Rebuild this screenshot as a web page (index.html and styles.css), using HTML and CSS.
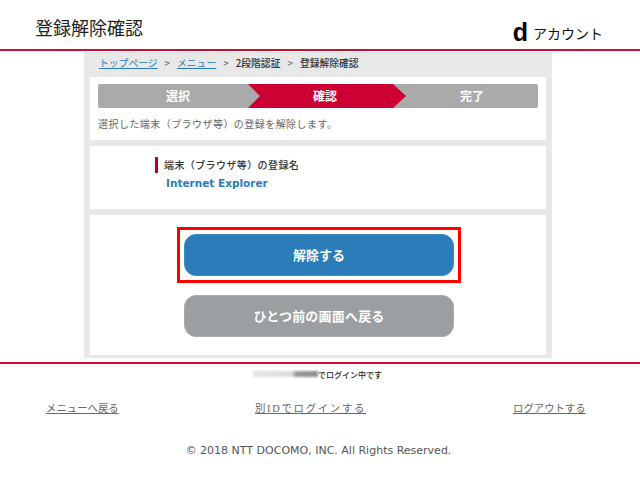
FILE: index.html
```html
<!DOCTYPE html>
<html lang="ja">
<head>
    <meta charset="UTF-8">
    <meta name="viewport" content="width=device-width, initial-scale=1.0">
    <title>登録解除確認</title>
    <link rel="stylesheet" href="styles.css">
</head>
<body>
    <!-- ヘッダー -->
    <header class="site-header">
        <h1 class="page-title">登録解除確認</h1>
        <div class="logo"><span class="logo-d">d</span><span class="logo-text">アカウント</span></div>
    </header>

    <div class="main">
        <!-- パンくず -->
        <div class="crumbs">
            <a href="#">トップページ</a><span class="sep">&gt;</span><a href="#">メニュー</a><span class="sep">&gt;</span><b>2段階認証</b><span class="sep">&gt;</span><b>登録解除確認</b>
        </div>

        <div class="panel panel-steps">
            <div class="steps">
                <div class="step step-first">選択</div>
                <div class="step step-current">確認</div>
                <div class="step step-last">完了</div>
            </div>
            <p class="lead">選択した端末（ブラウザ等）の登録を解除します。</p>
        </div>

        <div class="panel panel-name">
            <div class="name-label">端末（ブラウザ等）の登録名</div>
            <div class="name-value">Internet Explorer</div>
        </div>

        <div class="panel panel-actions">
            <div class="highlight">
                <a href="#" class="btn btn-blue">解除する</a>
            </div>
            <a href="#" class="btn btn-gray">ひとつ前の画面へ戻る</a>
        </div>
    </div>

    <!-- フッター -->
    <footer class="site-footer">
        <div class="login-line"><span class="masked"></span>でログイン中です</div>
        <div class="foot-links">
            <a href="#">メニューへ戻る</a>
            <a href="#" class="link-wide">別IDでログインする</a>
            <a href="#">ログアウトする</a>
        </div>
        <p class="copyright">© 2018 NTT DOCOMO, INC. All Rights Reserved.</p>
    </footer>
</body>
</html>
```

FILE: styles.css
```css
body {
    margin: 0;
    background: #fff;
    color: #333;
    font-family: "Noto Sans CJK JP", "Liberation Sans", sans-serif;
}

/* ヘッダー */
.site-header {
    height: 49px;
    padding: 0 37px 0 35px;
    display: flex;
    justify-content: space-between;
    border-bottom: 2px solid #c8102e;
}

.page-title {
    margin: 15px 0 0;
    font-size: 18px;
    line-height: 25px;
    font-weight: 400;
    color: #222;
}

.logo {
    display: flex;
    align-items: flex-end;
    height: 44px;
    color: #111;
}

.logo-d {
    font-family: "Liberation Sans", sans-serif;
    font-weight: 700;
    font-size: 25px;
    line-height: 24px;
    margin-right: 5px;
    color: #000;
}

.logo-text {
    font-size: 14px;
    line-height: 22px;
}

/* メイン */
.main {
    width: 456px;
    margin: 1px 0 0 84px;
    padding: 0 6px 3px;
    background: #e8e8e8;
}

.crumbs {
    height: 25px;
    padding-left: 9px;
    font-size: 9.8px;
    line-height: 22px;
    color: #444;
}

.crumbs a {
    color: #2a7cb8;
}

.crumbs b {
    color: #333;
    font-weight: 500;
}

.sep {
    margin: 0 7px;
    color: #666;
}

.panel {
    background: #fff;
}

.panel-steps {
    height: 63px;
    padding: 7px 8px 0;
    box-sizing: border-box;
}

.steps {
    display: flex;
    height: 24px;
    background: #aaa;
    border-radius: 2px;
    color: #fff;
    font-size: 12px;
    font-weight: 700;
    line-height: 24px;
    text-align: center;
}

.step-first {
    width: 150px;
    padding-left: 10px;
    box-sizing: border-box;
}

.step-current {
    width: 158px;
    padding-right: 4px;
    box-sizing: border-box;
    background: #cc0033;
    clip-path: polygon(0 0, 145px 0, 100% 50%, 145px 100%, 0 100%, 12px 50%);
}

.step-last {
    flex: 1;
}

.lead {
    margin: 8px 0 0;
    font-size: 10px;
    line-height: 15px;
    color: #666;
    letter-spacing: 0.45px;
}

.panel-name {
    height: 63px;
    margin-top: 6px;
    padding: 11px 0 0 65px;
    box-sizing: border-box;
}

.name-label {
    padding-left: 6px;
    border-left: 3px solid #c00027;
    font-size: 10px;
    font-weight: 500;
    line-height: 16px;
    color: #333;
    letter-spacing: 0.4px;
}

.name-value {
    margin: 3px 0 0 11px;
    font-family: "DejaVu Sans", sans-serif;
    font-size: 10.5px;
    font-weight: 700;
    line-height: 14px;
    color: #2a7cb8;
}

.panel-actions {
    height: 140px;
    margin-top: 6px;
    padding: 12px 0 0 2px;
    box-sizing: border-box;
}

.highlight {
    width: 284px;
    height: 56px;
    margin: 0 auto 12px;
    padding: 4px;
    box-sizing: border-box;
    border: 3px solid #f00;
}

.btn {
    display: block;
    width: 270px;
    height: 42px;
    margin: 0 auto;
    border-radius: 12px;
    box-sizing: border-box;
    color: #fff;
    font-size: 13px;
    font-weight: 700;
    line-height: 40px;
    text-align: center;
    text-decoration: none;
}

.highlight .btn {
    width: 100%;
}

.btn-blue {
    background: #2a7db8;
    border: 1px solid #3b8cc4;
}

.btn-gray {
    background: #9c9fa2;
    border: 1px solid #a8abae;
    letter-spacing: 0.2px;
}

/* フッター */
.site-footer {
    margin-top: 4px;
    border-top: 2px solid #c8102e;
}

.login-line {
    display: flex;
    justify-content: center;
    align-items: center;
    height: 18px;
    margin-top: 1px;
    padding-right: 5px;
    font-size: 8px;
    font-weight: 500;
    color: #222;
}

.masked {
    width: 65px;
    height: 6px;
    background: linear-gradient(to right, #e6e6e6 0, #dcdcdc 60%, #9a9a9a 66%, #8e8e8e 100%);
    filter: blur(1px);
}

.foot-links {
    display: grid;
    grid-template-columns: 209px 258px 1fr;
    margin-top: 18px;
    padding-left: 46px;
    font-family: "Liberation Serif", "Noto Sans CJK JP", serif;
    font-size: 10.4px;
    line-height: 16px;
}

.foot-links a {
    color: #666;
    justify-self: start;
}

.foot-links .link-wide {
    letter-spacing: 1.7px;
}

.copyright {
    margin: 26px 0 0;
    padding-right: 3px;
    font-family: "DejaVu Sans", sans-serif;
    font-size: 11px;
    line-height: 16px;
    text-align: center;
    color: #555;
}
```
